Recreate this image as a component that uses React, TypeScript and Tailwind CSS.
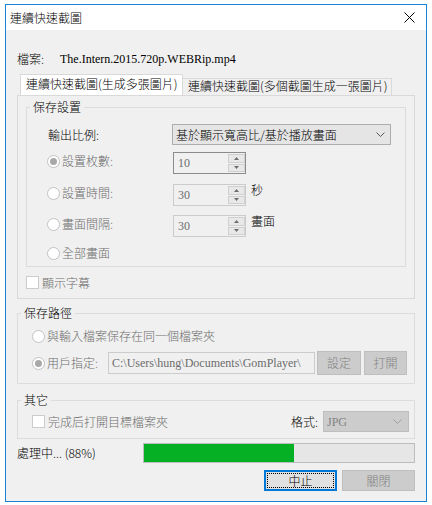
import React from "react";

// Windows 10 style "連續快速截圖" dialog

const serif = "font-['Liberation_Serif','Noto_Sans_CJK_TC',serif]";

function Radio({ checked = false }: { checked?: boolean }) {
  return (
    <span className="flex h-[13px] w-[13px] shrink-0 items-center justify-center rounded-full border border-[#c2c2c2] bg-white">
      {checked && <span className="h-[7px] w-[7px] rounded-full bg-[#a8a8a8]" />}
    </span>
  );
}

function Check() {
  return <span className="block h-[13px] w-[13px] shrink-0 border border-[#cccccc] bg-white" />;
}

function Chevron({ color }: { color: string }) {
  return (
    <svg width="9" height="5" viewBox="0 0 9 5">
      <path d="M0.5 0.5 L4.5 4.5 L8.5 0.5" fill="none" stroke={color} strokeWidth="1" />
    </svg>
  );
}

function Spin({ value, focus = false }: { value: string; focus?: boolean }) {
  return (
    <div
      className={
        focus
          ? "flex h-[22px] w-[73px] shrink-0 border border-[#8c8c8c] bg-[#f0f0f0]"
          : "flex h-[22px] w-[73px] shrink-0 border border-[#cccccc] bg-[#f0f0f0]"
      }
    >
      <span className={`flex-1 pl-[4px] pt-[3px] text-[#6d6d6d] ${serif}`}>{value}</span>
      <div className="flex w-[17px] flex-col gap-[1px] py-[1px]">
        <span className="flex flex-1 items-center justify-center border border-[#d0d0d0] bg-[#e8e8e8]">
          <svg width="5" height="3" viewBox="0 0 5 3">
            <path d="M0 3 L2.5 0 L5 3 Z" fill="#6d6d6d" />
          </svg>
        </span>
        <span className="flex flex-1 items-center justify-center border border-[#d0d0d0] bg-[#e8e8e8]">
          <svg width="5" height="3" viewBox="0 0 5 3">
            <path d="M0 0 L2.5 3 L5 0 Z" fill="#6d6d6d" />
          </svg>
        </span>
      </div>
    </div>
  );
}

export default function App() {
  return (
    <div className="h-[505px] w-[432px] bg-white pl-[5px] pt-[4px] font-['Noto_Sans_CJK_TC','Noto_Sans_CJK_JP',sans-serif] text-[12px] font-light leading-[14px] text-black">

      {/* window */}

      <div className="flex h-[498px] w-[422px] flex-col border border-[#1883d7]">

        {/* title bar */}

        <div className="flex h-[25px] items-center justify-between bg-white pl-[4px] pr-[11px]">
          <span>連續快速截圖</span>
          <svg width="11" height="11" viewBox="0 0 11 11">
            <path d="M0.5 0.5 L10.5 10.5 M10.5 0.5 L0.5 10.5" stroke="#000" strokeWidth="1" />
          </svg>
        </div>

        {/* body */}

        <div className="flex flex-1 flex-col bg-[#f0f0f0] px-[11px]">

          {/* file name */}

          <div className="mt-[22px] flex h-[14px] items-center">
            <span className="w-[43px]">檔案:</span>
            <span className={serif}>The.Intern.2015.720p.WEBRip.mp4</span>
          </div>

          {/* tabs */}

          <div className="mt-[8px] flex h-[21px] items-end pl-[3px]">
            <div className="h-[21px] w-[163px] border border-b-0 border-[#d9d9d9] bg-white pl-[5px] pt-[2px]">
              連續快速截圖(生成多張圖片)
            </div>
            <div className="h-[17px] w-[209px] border border-b-0 border-l-0 border-[#d9d9d9] bg-[#f0f0f0] pl-[5px]">
              連續快速截圖(多個截圖生成一張圖片)
            </div>
          </div>

          {/* tab panel */}

          <div className="h-[204px] border border-[#d9d9d9]">

            <fieldset className="ml-[8px] mt-[4px] w-[380px] border border-[#dcdcdc] pb-[4px]">
              <legend className="ml-[3px] px-[3px]">保存設置</legend>

              <div className="mt-[10px] flex items-center pl-[21px]">
                <span className="w-[124px]">輸出比例:</span>
                <div className="flex h-[21px] w-[219px] items-center justify-between border border-[#adadad] bg-[#e5e5e5] pl-[3px] pr-[5px]">
                  <span>基於顯示寬高比/基於播放畫面</span>
                  <Chevron color="#5a5a5a" />
                </div>
              </div>

              {[
                { label: "設置枚數:", value: "10", checked: true, focus: true, unit: "", mt: "mt-[7px]" },
                { label: "設置時間:", value: "30", checked: false, focus: false, unit: "秒", mt: "mt-[10px]" },
                { label: "畫面間隔:", value: "30", checked: false, focus: false, unit: "畫面", mt: "mt-[9px]" },
              ].map((row, i) => (
                <div key={i} className={`flex items-start pl-[20px] ${row.mt}`}>
                  <div className="flex h-[18px] w-[126px] items-center gap-[2px] text-[#6d6d6d]">
                    <Radio checked={row.checked} />
                    <span>{row.label}</span>
                  </div>
                  <Spin value={row.value} focus={row.focus} />
                  <span className="ml-[5px] leading-[12px]">{row.unit}</span>
                </div>
              ))}

              <div className="mt-[7px] flex h-[18px] items-center gap-[2px] pl-[20px] text-[#6d6d6d]">
                <Radio />
                <span>全部畫面</span>
              </div>
            </fieldset>

            <div className="ml-[8px] mt-[9px] flex h-[13px] items-center gap-[3px] text-[#6d6d6d]">
              <Check />
              <span>顯示字幕</span>
            </div>

          </div>

          {/* save path */}

          <fieldset className="mt-[7px] border border-[#dcdcdc] pb-[8px]">
            <legend className="ml-[3px] px-[3px]">保存路徑</legend>

            <div className="mt-[7px] flex h-[18px] items-center gap-[2px] pl-[14px] text-[#6d6d6d]">
              <Radio />
              <span>與輸入檔案保存在同一個檔案夾</span>
            </div>

            <div className="mt-[6px] flex h-[24px] items-center pl-[14px]">
              <div className="flex w-[76px] items-center gap-[2px] text-[#6d6d6d]">
                <Radio checked />
                <span>用戶指定:</span>
              </div>
              <div className={`flex h-[22px] w-[207px] items-center border border-[#cccccc] bg-[#f0f0f0] pl-[3px] text-[#6d6d6d] ${serif}`}>
                C:\Users\hung\Documents\GomPlayer\
              </div>
              <div className="ml-[2px] flex h-[24px] w-[44px] items-center justify-center border border-[#bfbfbf] bg-[#cccccc] text-[#838383]">
                設定
              </div>
              <div className="ml-[3px] flex h-[24px] w-[43px] items-center justify-center border border-[#bfbfbf] bg-[#cccccc] text-[#838383]">
                打開
              </div>
            </div>
          </fieldset>

          {/* other */}

          <fieldset className="mt-[9px] border border-[#dcdcdc] pb-[6px]">
            <legend className="ml-[3px] px-[3px]">其它</legend>

            <div className="mt-[4px] flex h-[21px] items-center pl-[14px] pr-[5px]">
              <Check />
              <span className="ml-[3px] text-[#6d6d6d]">完成后打開目標檔案夾</span>
              <span className="ml-auto mr-[5px]">格式:</span>
              <div className="flex h-[21px] w-[86px] items-center justify-between border border-[#bfbfbf] bg-[#cccccc] pl-[3px] pr-[6px]">
                <span className={`text-[#838383] ${serif}`}>JPG</span>
                <Chevron color="#a0a0a0" />
              </div>
            </div>
          </fieldset>

          {/* progress */}

          <div className="mt-[4px] flex h-[20px] items-center">
            <span className="w-[126px]">處理中... (88%)</span>
            <div className="h-[20px] w-[272px] border border-[#bcbcbc] bg-[#e6e6e6]">
              <div className="h-full w-[150px] bg-[#06b025]" />
            </div>
          </div>

          {/* buttons */}

          <div className="mt-[7px] flex justify-end gap-[5px]">
            <div className="h-[21px] w-[73px] border-2 border-[#0078d7] bg-[#e1e1e1] p-[1px]">
              <div className="flex h-full items-center justify-center border border-dotted border-black">
                中止
              </div>
            </div>
            <div className="flex h-[21px] w-[73px] items-center justify-center border border-[#bfbfbf] bg-[#cccccc] text-[#838383]">
              關閉
            </div>
          </div>

        </div>

      </div>

    </div>
  );
}
